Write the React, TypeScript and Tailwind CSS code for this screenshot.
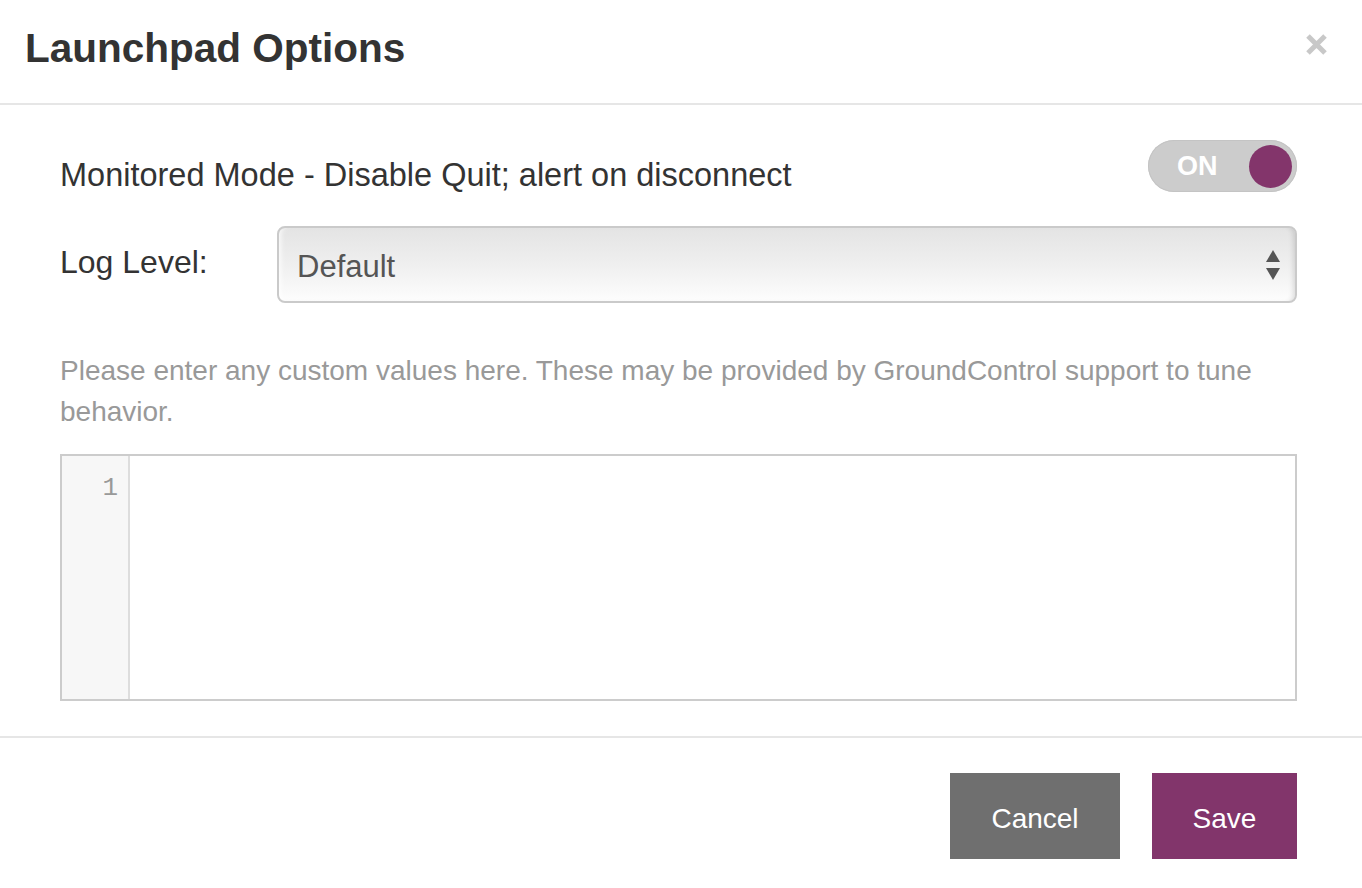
import React, { useState } from 'react';

const Toggle = ({ on, onChange }: { on: boolean; onChange: (v: boolean) => void }) => (
  <button
    onClick={() => onChange(!on)}
    className="flex items-center justify-between w-[149px] h-[52px] rounded-full bg-[#cccccc] pl-[29px] pr-[5px] shadow-[inset_0_0_0_1px_#c4c4c4]"
  >
    <span className="text-[27px] leading-none font-bold text-white">{on ? 'ON' : 'OFF'}</span>
    <span className="w-[43px] h-[43px] rounded-full bg-[#83356b]" />
  </button>
);

const LaunchpadOptions: React.FC = () => {
  const [monitored, setMonitored] = useState(true);

  return (
    <div className="w-full h-[888px] bg-white text-[#333] font-['Liberation_Sans',Arial,sans-serif]">
      {/* header */}
      <div className="flex justify-between h-[105px] border-b-2 border-[#e6e6e6] pl-[25px] pr-[34px]">
        <h1 className="mt-[28px] text-[40.5px] leading-none font-bold text-[#333]">Launchpad Options</h1>
        <button className="mt-[33px] w-[23px] h-[23px]">
          <svg viewBox="0 0 23 23" width="23" height="23">
            <path d="M3 3 L20 20 M20 3 L3 20" stroke="#c8c8c8" strokeWidth="5" />
          </svg>
        </button>
      </div>

      {/* body */}
      <div className="pl-[60px] pr-[65px] pt-[35px]">
        <div className="flex justify-between items-start">
          <span className="mt-[19px] text-[32.5px] leading-none">Monitored Mode - Disable Quit; alert on disconnect</span>
          <Toggle on={monitored} onChange={setMonitored} />
        </div>

        <div className="flex items-start mt-[34px]">
          <span className="w-[217px] shrink-0 mt-[20px] text-[32px] leading-none">Log Level:</span>
          <div className="flex-1 flex items-center justify-between h-[77px] rounded-[8px] border-2 border-[#cacaca] bg-linear-to-b from-[#e4e4e4] via-[#efefef] to-[#fdfdfd] pl-[18px] pr-[15px] pt-[4px] shadow-[inset_-5px_0_5px_-3px_rgba(0,0,0,0.12),inset_5px_0_5px_-3px_rgba(255,255,255,0.8)]">
            <span className="text-[31px] leading-none text-[#555]">Default</span>
            <svg viewBox="0 0 14 30" width="14" height="30" className="-mt-[4px]">
              <path d="M7 0 L14 12 L0 12 Z" fill="#555" />
              <path d="M0 18 L14 18 L7 30 Z" fill="#555" />
            </svg>
          </div>
        </div>

        <p className="mt-[47px] text-[28px] leading-[41px] text-[#999]">
          Please enter any custom values here. These may be provided by GroundControl support to tune behavior.
        </p>

        <div className="flex mt-[22px] h-[247px] border-2 border-[#cccccc]">
          <div className="w-[68px] shrink-0 bg-[#f7f7f7] border-r-2 border-[#dddddd] pt-[12px] pr-[10px] text-right font-['Liberation_Mono',monospace] text-[26px] leading-[40px] text-[#999]">
            1
          </div>
          <div className="flex-1 bg-white" />
        </div>
      </div>

      {/* footer */}
      <div className="mt-[35px] border-t-2 border-[#e6e6e6] flex justify-end gap-[32px] pr-[65px] pt-[35px]">
        <button className="w-[170px] h-[86px] pt-[6px] bg-[#6f6f6f] text-white text-[28px]">Cancel</button>
        <button className="w-[145px] h-[86px] pt-[6px] bg-[#82356b] text-white text-[28px]">Save</button>
      </div>
    </div>
  );
};

export default LaunchpadOptions;
